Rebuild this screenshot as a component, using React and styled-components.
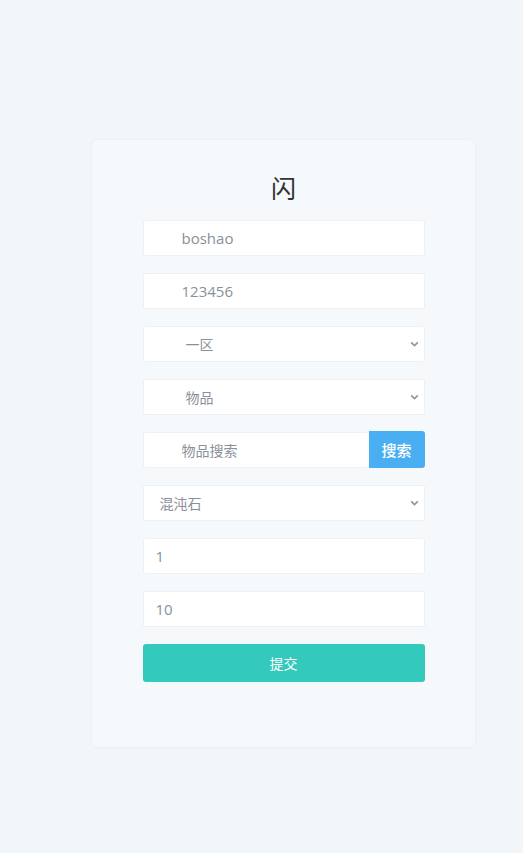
import React from "react";
import styled, { createGlobalStyle } from "styled-components";

const GlobalStyle = createGlobalStyle`
  html, body {
    margin: 0;
    padding: 0;
    background: #f3f6f9;
    font-family: "Open Sans", "Noto Sans CJK SC", sans-serif;
  }
  * {
    box-sizing: border-box;
  }
`;

const Page = styled.div`
  min-height: 853px;
  display: flex;
  justify-content: center;
  padding-top: 140px;
  padding-left: 44px;
`;

const Card = styled.div`
  width: 383px;
  height: 607px;
  background: #f6f9fc;
  border-radius: 6px;
  box-shadow: 0 0 3px rgba(200, 210, 220, 0.35);
  display: flex;
  flex-direction: column;
  align-items: center;
  padding-top: 30px;
`;

const Title = styled.h1`
  margin: 0 0 16px;
  font-family: "Noto Sans CJK SC", sans-serif;
  font-weight: 400;
  font-size: 25px;
  line-height: 34px;
  color: #333;
`;

const Form = styled.div`
  width: 282px;
  display: flex;
  flex-direction: column;
  gap: 17px;
`;

const Field = styled.div`
  height: 36px;
  background: #fff;
  border: 1px solid #eef1f4;
  border-radius: 2px;
  display: flex;
  align-items: center;
  padding-left: ${(p) => p.$indent}px;
  font-family: "Open Sans", "Noto Sans CJK SC", sans-serif;
  font-size: ${(p) => p.$size || 15}px;
  color: #8a9099;
  position: relative;
`;

const Chevron = styled.svg`
  position: absolute;
  right: 5px;
  top: 50%;
  margin-top: -4px;
  width: 9px;
  height: 8px;
`;

const SearchRow = styled.div`
  display: flex;
  height: 36px;
`;

const SearchInput = styled(Field)`
  flex: 1;
  border-right: none;
`;

const SearchButton = styled.button`
  width: 56px;
  height: 37px;
  margin-top: -1px;
  border: none;
  border-radius: 0 3px 3px 0;
  background: #4aaef3;
  color: #fff;
  font-family: "Noto Sans CJK SC", sans-serif;
  font-weight: 500;
  font-size: 15px;
  padding: 0;
`;

const Submit = styled.button`
  height: 38px;
  border: none;
  border-radius: 3px;
  background: #33c9bc;
  color: #fff;
  font-family: "Noto Sans CJK SC", sans-serif;
  font-size: 14px;
`;

function SelectField({ indent, children }) {
  return (
    <Field $indent={indent} $size={14}>
      {children}
      <Chevron viewBox="0 0 9 8">
        <path d="M1.2 2.4 L4.5 5.6 L7.8 2.4" fill="none" stroke="#8f949b" strokeWidth="1.6" />
      </Chevron>
    </Field>
  );
}

export default function App() {
  return (
    <>
      <GlobalStyle />
      <Page>
        <Card>
          <Title>闪</Title>
          <Form>
            <Field $indent={38}>boshao</Field>
            <Field $indent={38}>123456</Field>
            <SelectField indent={42}>一区</SelectField>
            <SelectField indent={42}>物品</SelectField>
            <SearchRow>
              <SearchInput $indent={38} $size={14}>物品搜索</SearchInput>
              <SearchButton>搜索</SearchButton>
            </SearchRow>
            <SelectField indent={16}>混沌石</SelectField>
            <Field $indent={12}>1</Field>
            <Field $indent={12}>10</Field>
            <Submit>提交</Submit>
          </Form>
        </Card>
      </Page>
    </>
  );
}
